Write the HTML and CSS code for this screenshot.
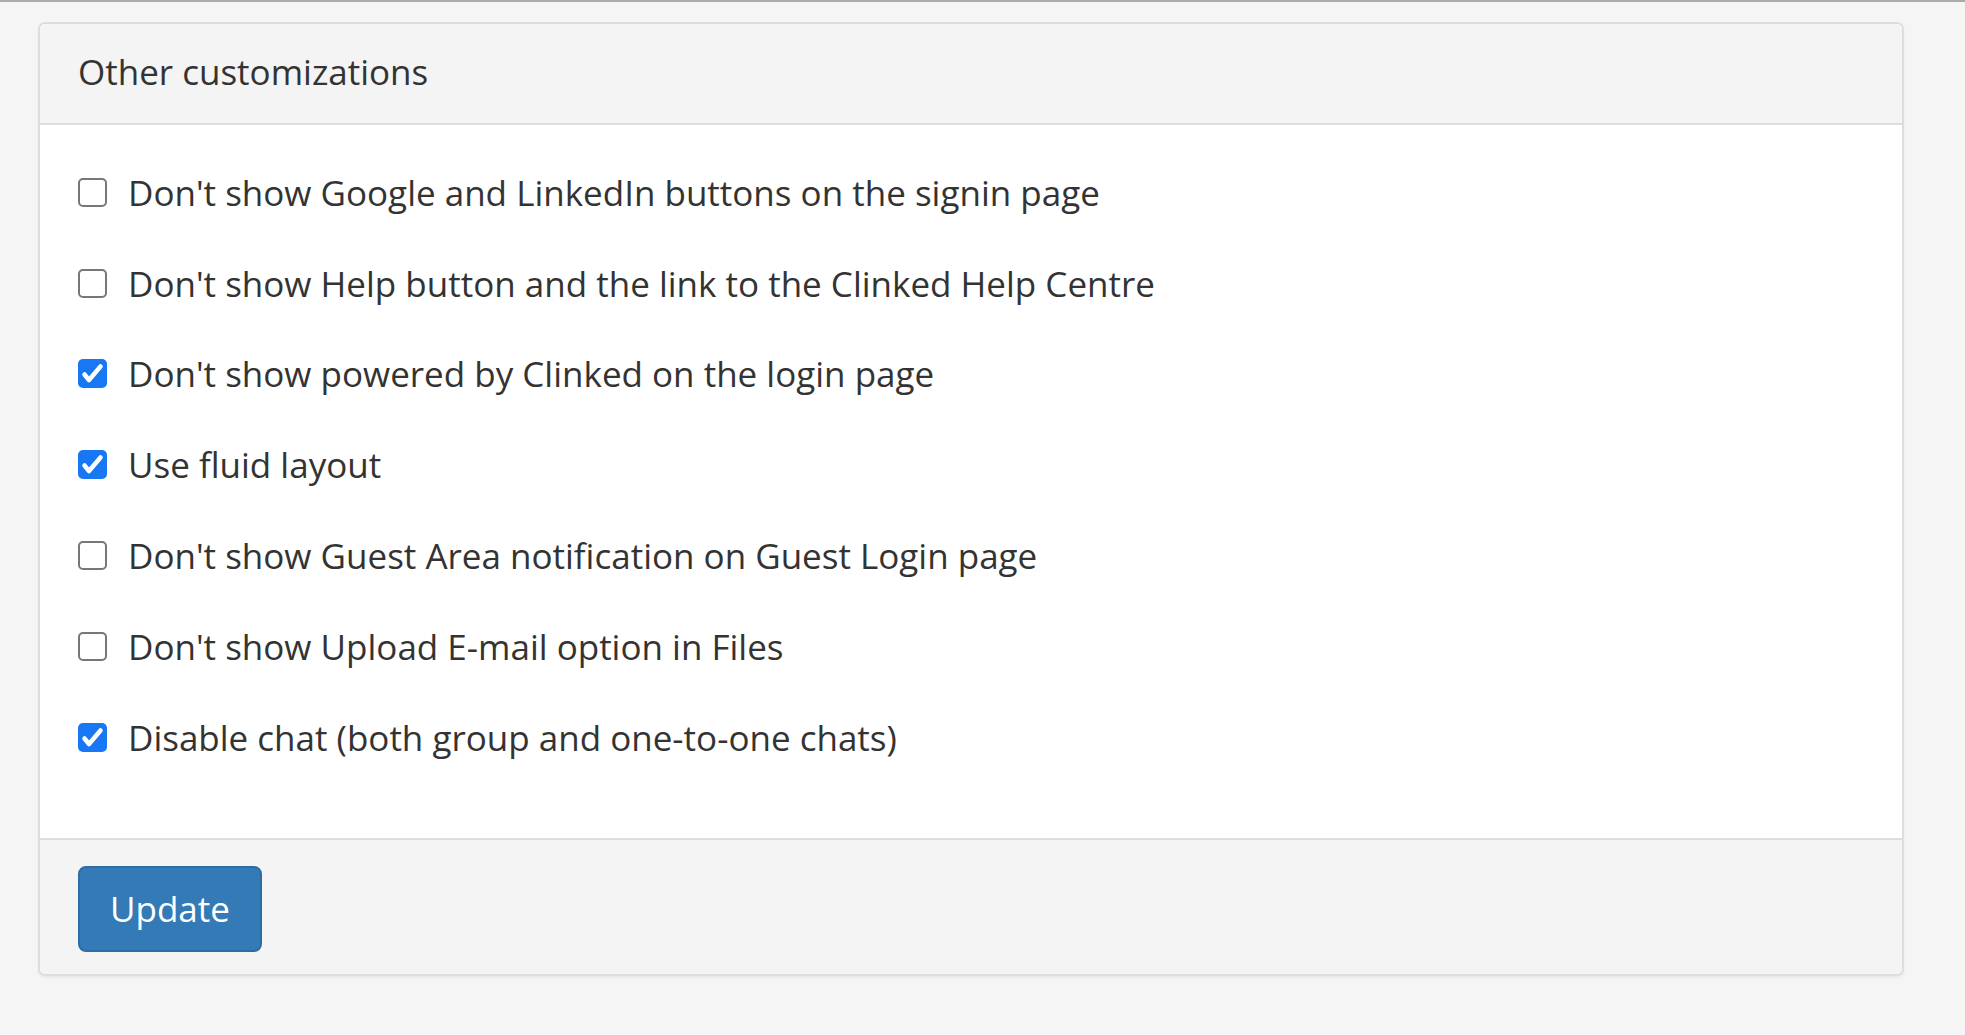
FILE: index.html
```html
<!DOCTYPE html>
<html>
<head>
<meta charset="utf-8">
<link rel="stylesheet" href="styles.css">
</head>
<body>
<div class="topline"></div>
<div class="page">
  <div class="panel">
    <div class="panel-heading">Other customizations</div>
    <div class="panel-body">
      <label class="row"><span class="cb"></span><span class="txt">Don't show Google and LinkedIn buttons on the signin page</span></label>
      <label class="row"><span class="cb"></span><span class="txt">Don't show Help button and the link to the Clinked Help Centre</span></label>
      <label class="row"><span class="cb on"><svg viewBox="0 0 29 29"><path d="M6.5 15.5 L11 21 L22.5 7.5" fill="none" stroke="#fff" stroke-width="4.5" stroke-linecap="round" stroke-linejoin="round"/></svg></span><span class="txt">Don't show powered by Clinked on the login page</span></label>
      <label class="row"><span class="cb on"><svg viewBox="0 0 29 29"><path d="M6.5 15.5 L11 21 L22.5 7.5" fill="none" stroke="#fff" stroke-width="4.5" stroke-linecap="round" stroke-linejoin="round"/></svg></span><span class="txt">Use fluid layout</span></label>
      <label class="row"><span class="cb"></span><span class="txt">Don't show Guest Area notification on Guest Login page</span></label>
      <label class="row"><span class="cb"></span><span class="txt">Don't show Upload E-mail option in Files</span></label>
      <label class="row"><span class="cb on"><svg viewBox="0 0 29 29"><path d="M6.5 15.5 L11 21 L22.5 7.5" fill="none" stroke="#fff" stroke-width="4.5" stroke-linecap="round" stroke-linejoin="round"/></svg></span><span class="txt">Disable chat (both group and one-to-one chats)</span></label>
    </div>
    <div class="panel-footer">
      <button class="btn">Update</button>
    </div>
  </div>
</div>
</body>
</html>
```

FILE: styles.css
```css
html, body {
  margin: 0;
  padding: 0;
  background: #f5f5f5;
  font-family: "Open Sans", "Noto Sans", sans-serif;
  color: #333;
}
.topline {
  height: 2px;
  background: #aaa;
}
.page {
  padding: 20px 61px 57px 38px;
}
.panel {
  background: #fff;
  border: 2px solid #ddd;
  border-radius: 7px;
  box-shadow: 0 2px 3px rgba(0,0,0,0.05);
  overflow: hidden;
}
.panel-heading {
  background: #f4f4f4;
  border-bottom: 2px solid #ddd;
  display: flex;
  align-items: center;
  padding-left: 38px;
  padding-bottom: 5px;
  box-sizing: border-box;
  height: 101px;
  font-size: 35px;
}
.panel-body {
  padding: 22px 38px 55px 38px;
}
.row {
  display: flex;
  align-items: center;
  height: 90.8px;
  font-size: 35px;
}
.cb {
  width: 29px;
  height: 29px;
  border: 2.5px solid #777;
  border-radius: 5px;
  margin-right: 21px;
  flex: none;
  box-sizing: border-box;
}
.cb.on {
  background: #1877f2;
  border: none;
}
.cb svg {
  display: block;
  width: 29px;
  height: 29px;
}
.panel-footer {
  background: #f4f4f4;
  border-top: 2px solid #ddd;
  padding: 26px 38px 22px 38px;
}
.btn {
  display: block;
  width: 184px;
  height: 86px;
  background: #337ab7;
  border: 2px solid #2e6da4;
  border-radius: 8px;
  color: #fff;
  font-family: "Open Sans", "Noto Sans", sans-serif;
  font-size: 35px;
  padding: 0;
}
```
